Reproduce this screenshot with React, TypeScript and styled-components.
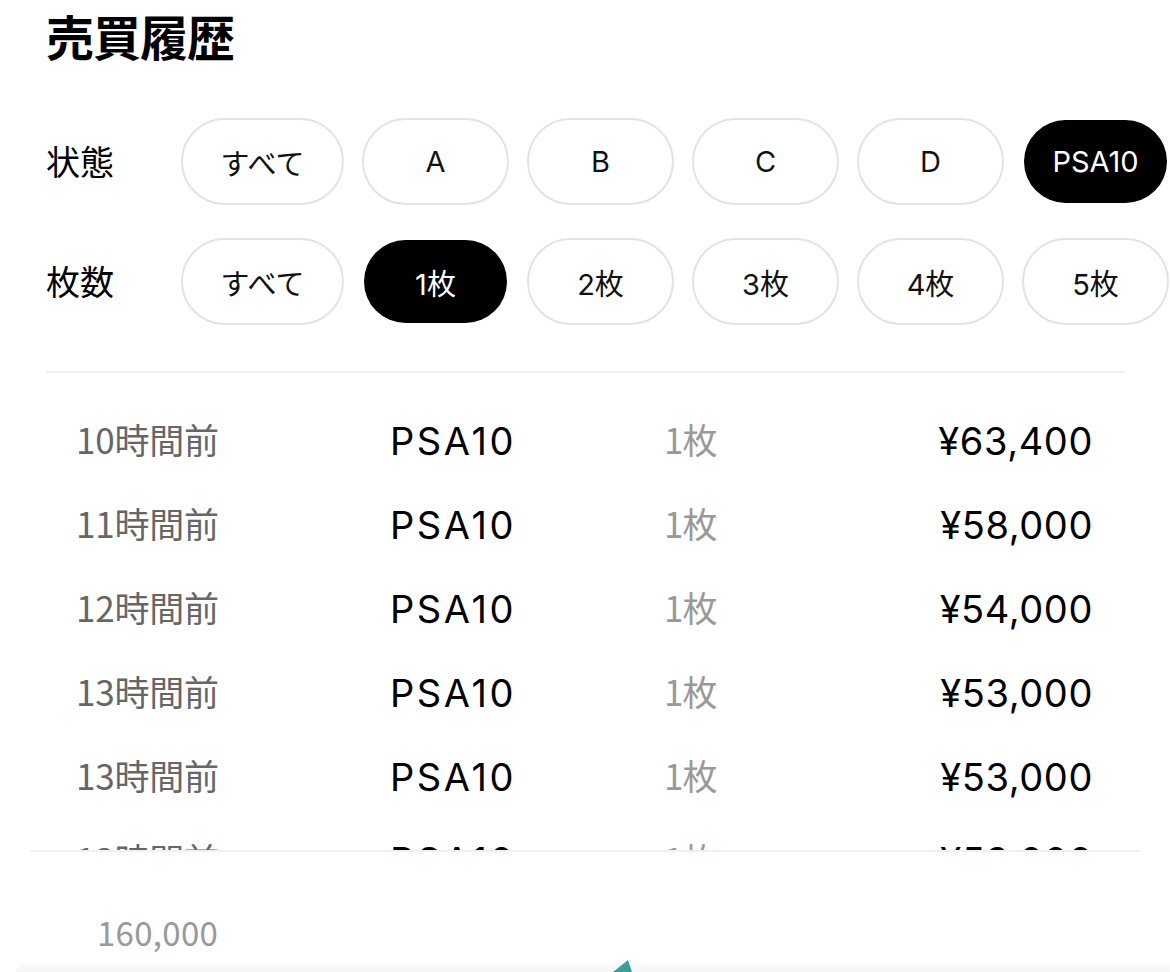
import React, { useState } from 'react';
import styled, { createGlobalStyle } from 'styled-components';

type Trade = {
  ago: string;
  grade: string;
  qty: string;
  price: string;
};

const GRADES = ['すべて', 'A', 'B', 'C', 'D', 'PSA10'];
const COUNTS = ['すべて', '1枚', '2枚', '3枚', '4枚', '5枚'];

const TRADES: Trade[] = [
  { ago: '10時間前', grade: 'PSA10', qty: '1枚', price: '¥63,400' },
  { ago: '11時間前', grade: 'PSA10', qty: '1枚', price: '¥58,000' },
  { ago: '12時間前', grade: 'PSA10', qty: '1枚', price: '¥54,000' },
  { ago: '13時間前', grade: 'PSA10', qty: '1枚', price: '¥53,000' },
  { ago: '13時間前', grade: 'PSA10', qty: '1枚', price: '¥53,000' },
  { ago: '13時間前', grade: 'PSA10', qty: '1枚', price: '¥53,000' },
];

const JP = `"Noto Sans CJK JP", sans-serif`;
const LATIN = `Inter, "Noto Sans CJK JP", sans-serif`;

// --- Styled Components ---
const GlobalStyle = createGlobalStyle`
  html, body { margin: 0; padding: 0; background: #fff; }
  body { font-family: ${JP}; color: #000; overflow: hidden; }
`;

const Page = styled.div` width: 1170px; height: 972px; padding: 0 45px 0 46px; box-sizing: border-box; overflow: hidden; position: relative; `;
const Title = styled.h2` margin: 0; font-size: 48px; line-height: normal; font-weight: 700; letter-spacing: -1px; `;
const Filters = styled.div` display: flex; flex-direction: column; gap: 33px; margin-top: 48px; `;
const FilterRow = styled.div` display: flex; align-items: center; width: 1124px; overflow: hidden; `;
const FilterLabel = styled.div` flex: 0 0 135px; font-size: 34px; line-height: 40px; margin-top: -2px; `;
const ChipList = styled.div` display: flex; gap: 18px; flex-wrap: nowrap; `;
const Chip = styled.button<{ $active: boolean; $wide?: boolean }>`
  flex: 0 0 ${p => (p.$wide ? 163 : 147)}px;
  height: 87px;
  border-radius: 44px;
  border: 2px solid ${p => (p.$active ? 'transparent' : '#e3e3e3')};
  background: ${p => (p.$active ? '#000' : '#fff')};
  background-clip: padding-box;
  color: ${p => (p.$active ? '#fff' : '#111')};
  font-family: ${LATIN};
  font-size: 29px;
  padding: 0;
  cursor: pointer;
`;
const Divider = styled.hr` border: none; border-top: 2px solid #f0f0f0; margin: 46px 0 0; `;
const TradeList = styled.div` height: 477px; overflow: hidden; padding: 26px 32px 0 30px; box-sizing: border-box; `;
const TradeRow = styled.div` display: grid; grid-template-columns: 314px 274px 1fr auto; align-items: center; height: 84px; `;
const Ago = styled.span` font-family: ${JP}; font-size: 35px; color: #666; letter-spacing: -0.2px; margin-top: -6px; `;
const Grade = styled.span` font-family: ${LATIN}; font-size: 38px; letter-spacing: 2.6px; `;
const Qty = styled.span` font-family: ${JP}; font-size: 35px; color: #999; letter-spacing: -1px; margin-top: -6px; `;
const Price = styled.span` font-family: ${LATIN}; font-size: 38px; text-align: right; letter-spacing: 0.6px; `;
const ChartCard = styled.div` margin: 0 -15px 0 -16px; border-top: 2px solid #f0f0f0; height: 120px; position: relative; background: #fff; `;
const AxisLabel = styled.div` font-family: ${JP}; font-size: 33px; color: #999; padding: 60px 0 0 67px; line-height: 40px; letter-spacing: 0.3px; `;
const BottomFade = styled.div` position: absolute; left: -14px; right: -46px; bottom: 0; height: 8px; border-radius: 10px 0 0 0; background: linear-gradient(#fbfbfb, #f6f6f6); `;
const Spike = styled.svg` position: absolute; left: 570px; bottom: 0; `;

const FilterGroup = ({ label, options, selected, onSelect }: { label: string; options: string[]; selected: number; onSelect: (i: number) => void }) => (
  <FilterRow>
    <FilterLabel>{label}</FilterLabel>
    <ChipList>
      {options.map((opt, i) => (
        <Chip key={opt} $active={i === selected} $wide={i === 0} onClick={() => onSelect(i)}>
          {opt}
        </Chip>
      ))}
    </ChipList>
  </FilterRow>
);

const App = () => {
  const [grade, setGrade] = useState(5);
  const [count, setCount] = useState(1);

  return (
    <Page>
      <GlobalStyle />
      <Title>売買履歴</Title>
      <Filters>
        <FilterGroup label="状態" options={GRADES} selected={grade} onSelect={setGrade} />
        <FilterGroup label="枚数" options={COUNTS} selected={count} onSelect={setCount} />
      </Filters>
      <Divider />
      <TradeList>
        {TRADES.map((t, index) => (
          <TradeRow key={index}>
            <Ago>{t.ago}</Ago>
            <Grade>{t.grade}</Grade>
            <Qty>{t.qty}</Qty>
            <Price>{t.price}</Price>
          </TradeRow>
        ))}
      </TradeList>
      <ChartCard>
        <AxisLabel>160,000</AxisLabel>
        <BottomFade />
        <Spike width="40" height="14" viewBox="0 0 40 14">
          <polygon points="13,14 28,2 32,14" fill="#3c9f97" />
        </Spike>
      </ChartCard>
    </Page>
  );
};

export default App;
